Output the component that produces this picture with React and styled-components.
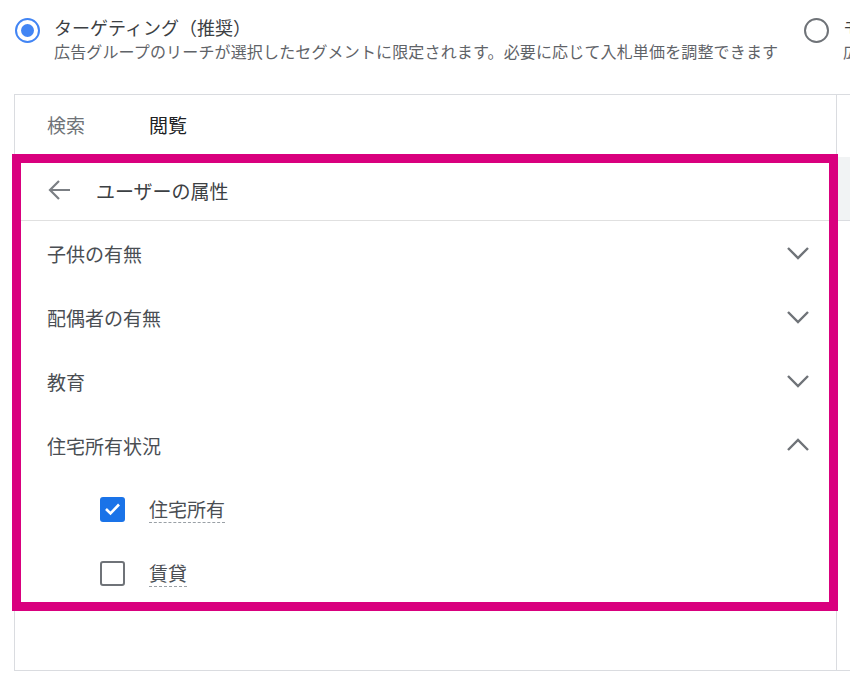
import React from 'react';
import styled, { createGlobalStyle } from 'styled-components';

const GlobalStyle = createGlobalStyle`
  html, body {
    margin: 0;
    padding: 0;
    background: #ffffff;
    overflow: hidden;
  }
  body {
    font-family: "Noto Sans CJK JP", "Noto Sans", sans-serif;
    color: #3c4043;
  }
`;

const Page = styled.div`
  width: 850px;
  height: 677px;
  overflow: hidden;
  padding-top: 15px;
  box-sizing: border-box;
`;

const OptionRow = styled.div`
  display: flex;
  padding-left: 15px;
  height: 79px;
`;

const Option = styled.div`
  display: flex;
  gap: 14px;
  flex: none;
  width: ${props => props.width || 'auto'};
`;

const Radio = styled.span`
  flex: none;
  box-sizing: border-box;
  width: 25px;
  height: 25px;
  margin-top: 3px;
  border-radius: 50%;
  border: 2.5px solid ${props => (props.checked ? '#4285f4' : '#6f7378')};
  display: flex;
  align-items: center;
  justify-content: center;

  &::after {
    content: '';
    display: ${props => (props.checked ? 'block' : 'none')};
    width: 13px;
    height: 13px;
    border-radius: 50%;
    background: #4285f4;
  }
`;

const OptionText = styled.div`
  display: flex;
  flex-direction: column;
  white-space: nowrap;
`;

const OptionTitle = styled.span`
  font-size: 18px;
  line-height: 24px;
  color: #3c4043;
`;

const OptionDesc = styled.span`
  font-size: 16px;
  line-height: 24px;
  letter-spacing: 0.15px;
  color: #5f6368;
`;

const Panel = styled.div`
  margin-left: 14px;
  width: 860px;
  border: 1px solid #dadce0;
  display: grid;
  grid-template-columns: 821px 1fr;
`;

const LeftColumn = styled.div`
  display: flex;
  flex-direction: column;
`;

const RightColumn = styled.div`
  border-left: 1px solid #dadce0;
  display: flex;
  flex-direction: column;
`;

const RightSpacer = styled.div`
  height: 62px;
`;

const RightHeader = styled.div`
  height: 63px;
  background: #f1f3f4;
  border-bottom: 1px solid #dadce0;
`;

const TabBar = styled.div`
  display: flex;
  height: 59px;
  align-items: center;
`;

const Tab = styled.div`
  padding: 0 32px;
  font-size: 19px;
  color: ${props => (props.active ? '#202124' : '#6f7378')};
`;

const Highlight = styled.div`
  position: relative;
  z-index: 1;
  margin: 0 -2px 0 -3px;
  border: 9px solid #d9007e;
  height: 439px;
  overflow: hidden;
  background: #ffffff;
`;

const Header = styled.div`
  display: flex;
  align-items: center;
  gap: 25px;
  height: 58px;
  padding: 0 0 3px 26px;
  box-sizing: border-box;
  border-bottom: 1px solid #e0e0e0;
  font-size: 19px;
  color: #3c4043;
`;

const Row = styled.div`
  display: flex;
  align-items: center;
  justify-content: space-between;
  height: 64px;
  padding: 0 19px 0 26px;
  font-size: 19px;
  color: #4a4e53;
`;

const CheckRow = styled.div`
  display: flex;
  align-items: center;
  gap: 24px;
  height: 64px;
  padding-left: 79px;
  font-size: 19px;
  color: #4a4e53;
`;

const Box = styled.span`
  flex: none;
  box-sizing: border-box;
  width: 25px;
  height: 25px;
  border-radius: 3px;
  background: ${props => (props.checked ? '#1a73e8' : '#ffffff')};
  border: ${props => (props.checked ? 'none' : '2.5px solid #6f7378')};
  display: flex;
  align-items: center;
  justify-content: center;
`;

const Label = styled.span`
  line-height: 26px;
  border-bottom: 1px dashed #9aa0a6;
`;

const Filler = styled.div`
  height: 59px;
`;

const Chevron = ({ up }) => (
  <svg width="24" height="14" viewBox="0 0 24 14">
    <polyline
      points={up ? '2,12 12,2 22,12' : '2,2 12,12 22,2'}
      fill="none"
      stroke="#6f7378"
      strokeWidth="2.4"
    />
  </svg>
);

const BackArrow = () => (
  <svg width="24" height="22" viewBox="0 0 24 22">
    <path d="M23 11H3M12 2l-9 9 9 9" fill="none" stroke="#7b7f84" strokeWidth="2.2" />
  </svg>
);

const Check = () => (
  <svg width="17" height="14" viewBox="0 0 17 14">
    <polyline points="2,7 6.5,11.5 15,2.5" fill="none" stroke="#ffffff" strokeWidth="2.6" />
  </svg>
);

const categories = [
  { label: '子供の有無' },
  { label: '配偶者の有無' },
  { label: '教育' },
  { label: '住宅所有状況', open: true }
];

const options = [
  { label: '住宅所有', checked: true },
  { label: '賃貸', checked: false }
];

const App = () => (
  <>
    <GlobalStyle />
    <Page>
      <OptionRow>
        <Option width="789px">
          <Radio checked />
          <OptionText>
            <OptionTitle>ターゲティング（推奨）</OptionTitle>
            <OptionDesc>広告グループのリーチが選択したセグメントに限定されます。必要に応じて入札単価を調整できます</OptionDesc>
          </OptionText>
        </Option>
        <Option>
          <Radio />
          <OptionText>
            <OptionTitle>モニタリング</OptionTitle>
            <OptionDesc>広告グループのリーチは制限されません</OptionDesc>
          </OptionText>
        </Option>
      </OptionRow>

      <Panel>
        <LeftColumn>
          <TabBar>
            <Tab>検索</Tab>
            <Tab active>閲覧</Tab>
          </TabBar>
          <Highlight>
            <Header>
              <BackArrow />
              ユーザーの属性
            </Header>
            {categories.map(cat => (
              <Row key={cat.label}>
                {cat.label}
                <Chevron up={cat.open} />
              </Row>
            ))}
            {options.map(opt => (
              <CheckRow key={opt.label}>
                <Box checked={opt.checked}>{opt.checked && <Check />}</Box>
                <Label>{opt.label}</Label>
              </CheckRow>
            ))}
          </Highlight>
          <Filler />
        </LeftColumn>
        <RightColumn>
          <RightSpacer />
          <RightHeader />
        </RightColumn>
      </Panel>
    </Page>
  </>
);

export default App;
